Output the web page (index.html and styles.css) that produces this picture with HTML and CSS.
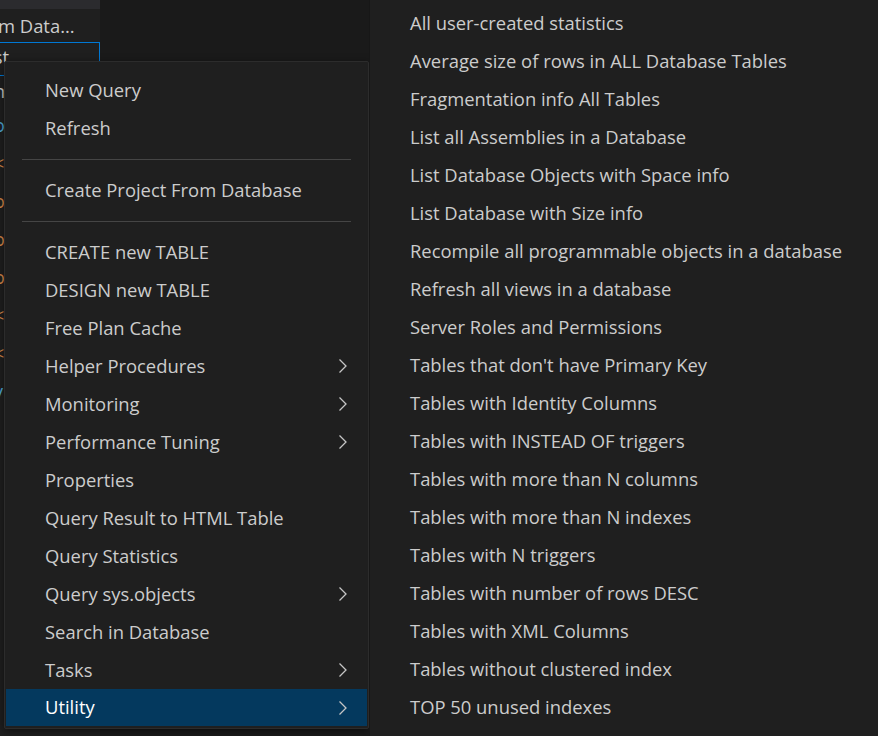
FILE: index.html
```html
<!DOCTYPE html>
<html>
<head>
<meta charset="utf-8">
<link rel="stylesheet" href="styles.css">
</head>
<body>
<div class="app">
  <aside class="sidebar">
    <div class="topstrip"></div>
    <div class="side-title">m Data...</div>
    <div class="side-input">ist</div>
    <div class="side-list">
      <div class="frag grey">n</div>
      <div class="frag teal">ol</div>
      <div class="frag orange">&lt;</div>
      <div class="frag orange">o</div>
      <div class="frag orange">o</div>
      <div class="frag orange">o</div>
      <div class="frag orange">&lt;</div>
      <div class="frag orange">&lt;</div>
      <div class="frag teal">y</div>
    </div>
  </aside>
  <main class="editor"></main>
</div>

<div class="menu">
  <div class="item">New Query</div>
  <div class="item">Refresh</div>
  <div class="sep"></div>
  <div class="item">Create Project From Database</div>
  <div class="sep"></div>
  <div class="item">CREATE new TABLE</div>
  <div class="item">DESIGN new TABLE</div>
  <div class="item">Free Plan Cache</div>
  <div class="item sub">Helper Procedures<svg class="chev" viewBox="0 0 10 16"><path d="M1.5 1.5 L8 8 L1.5 14.5"/></svg></div>
  <div class="item sub">Monitoring<svg class="chev" viewBox="0 0 10 16"><path d="M1.5 1.5 L8 8 L1.5 14.5"/></svg></div>
  <div class="item sub">Performance Tuning<svg class="chev" viewBox="0 0 10 16"><path d="M1.5 1.5 L8 8 L1.5 14.5"/></svg></div>
  <div class="item">Properties</div>
  <div class="item">Query Result to HTML Table</div>
  <div class="item">Query Statistics</div>
  <div class="item sub">Query sys.objects<svg class="chev" viewBox="0 0 10 16"><path d="M1.5 1.5 L8 8 L1.5 14.5"/></svg></div>
  <div class="item">Search in Database</div>
  <div class="item sub">Tasks<svg class="chev" viewBox="0 0 10 16"><path d="M1.5 1.5 L8 8 L1.5 14.5"/></svg></div>
  <div class="item sub active">Utility<svg class="chev" viewBox="0 0 10 16"><path d="M1.5 1.5 L8 8 L1.5 14.5"/></svg></div>
</div>

<div class="submenu">
  <div class="item">All user-created statistics</div>
  <div class="item">Average size of rows in ALL Database Tables</div>
  <div class="item">Fragmentation info All Tables</div>
  <div class="item">List all Assemblies in a Database</div>
  <div class="item">List Database Objects with Space info</div>
  <div class="item">List Database with Size info</div>
  <div class="item">Recompile all programmable objects in a database</div>
  <div class="item">Refresh all views in a database</div>
  <div class="item">Server Roles and Permissions</div>
  <div class="item">Tables that don't have Primary Key</div>
  <div class="item">Tables with Identity Columns</div>
  <div class="item">Tables with INSTEAD OF triggers</div>
  <div class="item">Tables with more than N columns</div>
  <div class="item">Tables with more than N indexes</div>
  <div class="item">Tables with N triggers</div>
  <div class="item">Tables with number of rows DESC</div>
  <div class="item">Tables with XML Columns</div>
  <div class="item">Tables without clustered index</div>
  <div class="item">TOP 50 unused indexes</div>
</div>
</body>
</html>
```

FILE: styles.css
```css
* { box-sizing: border-box; }
html, body {
  margin: 0;
  padding: 0;
  width: 878px;
  height: 736px;
  overflow: hidden;
  background: #1a1a1a;
  font-family: "Open Sans", "Noto Sans", sans-serif;
  color: #cccccc;
}
.app {
  display: flex;
  width: 878px;
  height: 736px;
}
.sidebar {
  width: 100px;
  flex: none;
  background: #1f1f1f;
  overflow: hidden;
}
.editor {
  flex: 1;
  background: #1a1a1a;
}
.topstrip {
  height: 9px;
  background: #2b2b2e;
}
.side-title {
  height: 33px;
  line-height: 34px;
  font-size: 18.4px;
  color: #cccccc;
  margin-left: -2px;
  white-space: nowrap;
}
.side-input {
  height: 34px;
  border: 1px solid #0078d4;
  border-left: none;
  width: 100px;
  font-size: 18.4px;
  line-height: 28px;
  text-indent: -11px;
  color: #cccccc;
  white-space: nowrap;
  overflow: hidden;
}
.frag {
  height: 38px;
  line-height: 38px;
  font-size: 18px;
  text-indent: -6px;
  white-space: nowrap;
  overflow: hidden;
  width: 20px;
}
.frag:first-child { height: 30px; line-height: 30px; }
.grey { color: #cccccc; }
.teal { color: #4fa8d8; }
.orange { color: #d8884a; }

.menu {
  position: absolute;
  left: 4px;
  top: 61px;
  width: 365px;
  padding: 9px 1px 2px 1px;
  background: #1f1f1f;
  border: 1px solid #2c2c2c;
  border-radius: 2px;
  box-shadow: 0 2px 8px rgba(0,0,0,0.5);
}
.item {
  height: 38px;
  display: flex;
  align-items: center;
  padding-left: 39px;
  padding-right: 19px;
  padding-bottom: 2px;
  font-size: 18.4px;
  color: #cccccc;
  white-space: nowrap;
}
.item.sub {
  justify-content: space-between;
}
.chev {
  width: 10px;
  height: 16px;
  fill: none;
  stroke: #c5c5c5;
  stroke-width: 1.3;
  margin-top: 2px;
}
.item.active {
  background: #04395e;
  color: #ffffff;
  height: 37px;
}
.sep {
  height: 24px;
  display: flex;
  align-items: center;
  padding: 0 16px;
}
.sep::before {
  content: "";
  flex: 1;
  height: 1px;
  background: #454545;
}
.submenu {
  position: absolute;
  left: 369px;
  top: 0;
  width: 520px;
  height: 740px;
  padding-top: 4px;
  background: #1f1f1f;
  border-left: 1px solid #171717;
}
.submenu .item {
  padding-left: 40px;
}
```
